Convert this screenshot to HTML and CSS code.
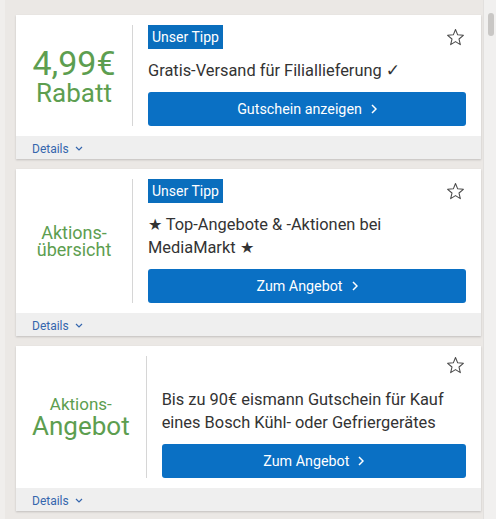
FILE: index.html
```html
<!DOCTYPE html>
<html lang="de">
<head>
<meta charset="utf-8">
<link rel="stylesheet" href="styles.css">
</head>
<body>
<div class="page">
  <main class="list">
    <article class="card">
      <div class="card-body">
        <div class="value">
          <span class="v-big">4,99€</span>
          <span class="v-sub">Rabatt</span>
        </div>
        <div class="info">
          <div class="info-head">
            <span class="badge">Unser Tipp</span>
            <svg class="star" viewBox="0 0 20 20" width="19" height="19"><path d="M10 1.6l2.3 5.6 6 .5-4.6 3.9 1.4 5.9L10 14.3l-5.1 3.2 1.4-5.9L1.7 7.7l6-.5z" fill="none" stroke="#4a4a4a" stroke-width="1.1" stroke-linejoin="round"/></svg>
          </div>
          <p class="title">Gratis-Versand für Filiallieferung <span class="check">✓</span></p>
          <a class="btn">Gutschein anzeigen <svg viewBox="0 0 6 10" width="6" height="10"><path d="M1 1l4 4-4 4" fill="none" stroke="#fff" stroke-width="1.5"/></svg></a>
        </div>
      </div>
      <div class="card-foot"><span class="details">Details <svg viewBox="0 0 8 5" width="8" height="5"><path d="M1 1l3 3 3-3" fill="none" stroke="#3566ad" stroke-width="1.2"/></svg></span></div>
    </article>

    <article class="card">
      <div class="card-body">
        <div class="value">
          <span class="v-mid">Aktions-</span>
          <span class="v-mid">übersicht</span>
        </div>
        <div class="info">
          <div class="info-head">
            <span class="badge">Unser Tipp</span>
            <svg class="star" viewBox="0 0 20 20" width="19" height="19"><path d="M10 1.6l2.3 5.6 6 .5-4.6 3.9 1.4 5.9L10 14.3l-5.1 3.2 1.4-5.9L1.7 7.7l6-.5z" fill="none" stroke="#4a4a4a" stroke-width="1.1" stroke-linejoin="round"/></svg>
          </div>
          <p class="title">★ Top-Angebote &amp; -Aktionen bei MediaMarkt ★</p>
          <a class="btn">Zum Angebot <svg viewBox="0 0 6 10" width="6" height="10"><path d="M1 1l4 4-4 4" fill="none" stroke="#fff" stroke-width="1.5"/></svg></a>
        </div>
      </div>
      <div class="card-foot"><span class="details">Details <svg viewBox="0 0 8 5" width="8" height="5"><path d="M1 1l3 3 3-3" fill="none" stroke="#3566ad" stroke-width="1.2"/></svg></span></div>
    </article>

    <article class="card">
      <div class="card-body">
        <div class="value">
          <span class="v-small">Aktions-</span>
          <span class="v-sub">Angebot</span>
        </div>
        <div class="info">
          <div class="info-head no-badge">
            <svg class="star" viewBox="0 0 20 20" width="19" height="19"><path d="M10 1.6l2.3 5.6 6 .5-4.6 3.9 1.4 5.9L10 14.3l-5.1 3.2 1.4-5.9L1.7 7.7l6-.5z" fill="none" stroke="#4a4a4a" stroke-width="1.1" stroke-linejoin="round"/></svg>
          </div>
          <p class="title">Bis zu 90€ eismann Gutschein für Kauf eines Bosch Kühl- oder Gefriergerätes</p>
          <a class="btn">Zum Angebot <svg viewBox="0 0 6 10" width="6" height="10"><path d="M1 1l4 4-4 4" fill="none" stroke="#fff" stroke-width="1.5"/></svg></a>
        </div>
      </div>
      <div class="card-foot"><span class="details">Details <svg viewBox="0 0 8 5" width="8" height="5"><path d="M1 1l3 3 3-3" fill="none" stroke="#3566ad" stroke-width="1.2"/></svg></span></div>
    </article>
  </main>
  <div class="scrollbar"><div class="thumb"></div></div>
</div>
</body>
</html>
```
FILE: styles.css
```css
html, body {
  margin: 0;
  padding: 0;
  height: 100%;
  overflow: hidden;
}
body {
  background: #ebe8e5;
  font-family: Roboto, "Liberation Sans", sans-serif;
  color: #333;
}
.page {
  display: flex;
  height: 100%;
  border-left: 5px solid #f0eeec;
  box-sizing: border-box;
}
.list {
  flex: 1;
  padding: 15px 2px 0 11px;
  display: flex;
  flex-direction: column;
  gap: 10px;
}
.card {
  background: #fff;
  box-shadow: 0 1px 2px rgba(0,0,0,0.18);
}
.card-body {
  display: flex;
  padding: 10px 15px 10px 0;
}
.value {
  min-width: 84px;
  padding: 0 16px;
  border-right: 1px solid #d6d6d6;
  display: flex;
  flex-direction: column;
  align-items: center;
  justify-content: center;
  color: #5d9e50;
  line-height: 1;
  text-align: center;
}
.v-big { font-size: 34px; }
.v-sub { font-size: 26px; }
.v-mid { font-size: 18px; line-height: 0.95; }
.v-small { font-size: 17px; line-height: 1.1; }
.info {
  flex: 1;
  padding-left: 15px;
  display: flex;
  flex-direction: column;
  gap: 10px;
}
.info-head {
  display: flex;
  justify-content: space-between;
  align-items: center;
  min-height: 24px;
}
.info-head.no-badge {
  min-height: 22px;
  align-items: flex-start;
}
.badge {
  background: #0a6ebd;
  color: #fff;
  font-size: 14px;
  line-height: 24px;
  padding: 0 4px;
}
.star {
  margin-left: auto;
  margin-right: 1px;
  display: block;
}
.title {
  margin: 0;
  padding-right: 16px;
  font-size: 16.4px;
  line-height: 23px;
  color: #333;
}
.check {
  font-family: "DejaVu Sans", sans-serif;
  font-weight: bold;
  font-size: 17px;
  line-height: 0;
}
.btn {
  display: flex;
  align-items: center;
  justify-content: center;
  gap: 9px;
  height: 34px;
  background: #0a70c4;
  color: #fff;
  font-size: 14.3px;
  border-radius: 3px;
}
.card-foot {
  background: #efefef;
  height: 23px;
  box-sizing: border-box;
  padding: 2px 0 0 16px;
  display: flex;
  align-items: center;
}
.details {
  color: #3566ad;
  font-size: 12px;
  display: flex;
  align-items: center;
  gap: 6px;
}
.scrollbar {
  width: 12px;
  background: #f1f0ef;
  border-left: 1px solid #e2e0de;
  position: relative;
}
.thumb {
  position: absolute;
  top: 13px;
  left: 4px;
  width: 6px;
  height: 23px;
  border-radius: 3px;
  background: #c9c7c5;
}
```
